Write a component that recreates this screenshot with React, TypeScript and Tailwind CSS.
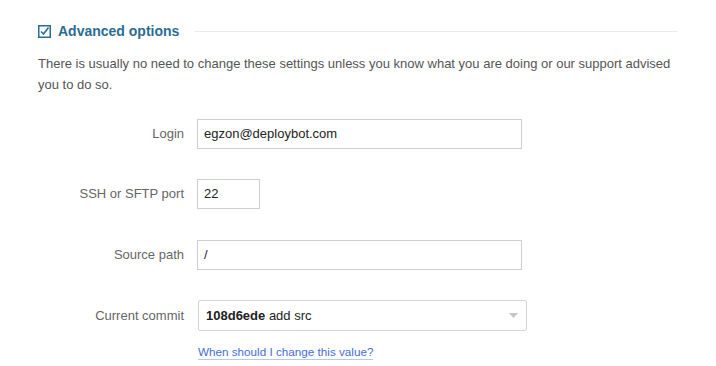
const fields = [
  { label: 'Login', value: 'egzon@deploybot.com', width: 'w-[325px]' },
  { label: 'SSH or SFTP port', value: '22', width: 'w-[63px]' },
  { label: 'Source path', value: '/', width: 'w-[325px]' },
];

const CheckIcon = () => (
  <svg width="13" height="13" viewBox="0 0 13 13" className="shrink-0">
    <rect x="0.75" y="0.75" width="11.5" height="11.5" fill="none" stroke="#2b6b94" strokeWidth="1.5" />
    <path d="M3 6.5 L5.5 9 L10.5 2.5" fill="none" stroke="#2b6b94" strokeWidth="1.6" />
  </svg>
);

export default function App() {
  return (
    <div className="min-h-screen bg-white font-['Liberation_Sans',Arial,sans-serif] text-[13px]">
      <div className="w-[678px] pl-[38px] pt-[21px]">
        <div className="flex items-center">
          <CheckIcon />
          <h2 className="ml-[7px] text-[14px] font-bold text-[#2b6b94]">Advanced options</h2>
          <div className="ml-[15px] h-px flex-1 bg-[#ebebeb]" />
        </div>
        <p className="mt-[11px] leading-[21px] text-[#555]">
          There is usually no need to change these settings unless you know what you are doing or our support advised you to do so.
        </p>
        <div className="mt-[24px] flex flex-col gap-[30px]">
          {fields.map((f, i) => (
            <div key={f.label} className={`flex items-center ${i === 2 ? 'mt-[1px]' : ''}`}>
              <label className="w-[146px] text-right text-[#666]">{f.label}</label>
              <div
                className={`ml-[13px] flex h-[30px] items-center border border-[#cfcfcf] px-[6px] text-[13px] text-[#222] ${f.width}`}
              >
                {f.value}
              </div>
            </div>
          ))}
          <div className="flex flex-col">
            <div className="flex items-center">
              <label className="w-[146px] text-right text-[#666]">Current commit</label>
              <div className="ml-[14px] flex h-[31px] w-[329px] items-center justify-between rounded-[2px] border border-[#d6d6d6] px-[7px] text-[#222]">
                <span>
                  <b>108d6ede</b> add src
                </span>
                <svg width="9" height="5" viewBox="0 0 9 5" className="mr-[1px]">
                  <path d="M0 0 H9 L4.5 5 Z" fill="#c4c4c4" />
                </svg>
              </div>
            </div>
            <div className="ml-[160px] mt-[11px]">
              <a className="border-b border-[#b8c8ea] pb-[1px] text-[11.7px] text-[#3f6fd6]" href="#">
                When should I change this value?
              </a>
            </div>
          </div>
        </div>
      </div>
    </div>
  );
}
